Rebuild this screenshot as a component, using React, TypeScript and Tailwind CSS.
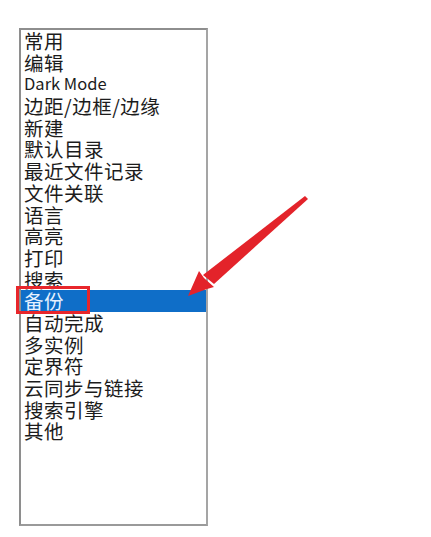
const items = [
  '常用',
  '编辑',
  'Dark Mode',
  '边距/边框/边缘',
  '新建',
  '默认目录',
  '最近文件记录',
  '文件关联',
  '语言',
  '高亮',
  '打印',
  '搜索',
  '备份',
  '自动完成',
  '多实例',
  '定界符',
  '云同步与链接',
  '搜索引擎',
  '其他',
];

const selected = '备份';

export default function App() {
  return (
    <div
      className="relative h-[537px] w-[431px] overflow-hidden bg-white"
      style={{ fontFamily: '"Noto Sans CJK SC", "Noto Sans", sans-serif' }}
    >
      <div className="pl-[19px] pt-[28px]">
        <div className="h-[498px] w-[189px] border-2 border-[#8e8e8e] border-r-[#a5a5a5] border-b-[#9a9a9a] bg-white">
          <ul className="flex flex-col">
            {items.map((item) => {
              const isSel = item === selected;
              const latin = /^[A-Za-z ]+$/.test(item);
              return (
                <li
                  key={item}
                  className={
                    'relative h-[21.7px] overflow-visible pl-[3px] whitespace-nowrap ' +
                    (isSel ? 'bg-[#0f6ec8] text-[#e6f1ff]' : 'text-[#1c1c1c]')
                  }
                >
                  <span
                    className={
                      latin
                        ? 'block text-[16.5px] leading-[21.7px]'
                        : 'block text-[19.5px] leading-[21.7px] tracking-[0.5px]'
                    }
                  >
                    {item}
                  </span>
                  {isSel && (
                    <span className="absolute left-[-5px] top-[-4px] h-[28px] w-[74px] border-[3px] border-[#e8262b]" />
                  )}
                </li>
              );
            })}
          </ul>
        </div>
      </div>

      {/* annotation arrow */}
      <svg className="absolute left-0 top-0" width="431" height="537" viewBox="0 0 431 537">
        <path d="M305 196 L308 199 L214 284 L203 275 Z" fill="#e3232a" />
        <path d="M188 296 L199 271 L204 278 L214 287 L207 289 Z" fill="#e3232a" />
      </svg>
    </div>
  );
}
